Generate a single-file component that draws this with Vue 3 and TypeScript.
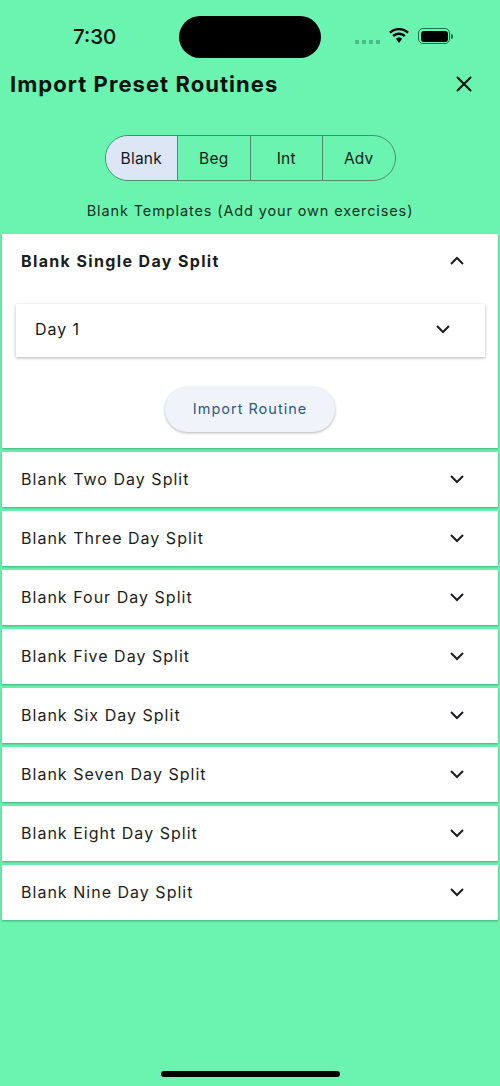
<script setup lang="ts">
const tabs: string[] = ['Blank', 'Beg', 'Int', 'Adv']
const splits: string[] = ['Two', 'Three', 'Four', 'Five', 'Six', 'Seven', 'Eight', 'Nine']
</script>

<template>
  <div class="screen">
    <div class="status">
      <span class="time">7:30</span>
      <div class="island"></div>
      <div class="status-icons">
        <div class="dots"><i></i><i></i><i></i><i></i></div>
        <svg class="wifi" width="22" height="16" viewBox="0 0 22 16">
          <path d="M11 2.2c3.2 0 6.1 1.2 8.3 3.3l1.6-1.7C18.3 1.300 14.800 0 11 0S3.700 1.300 1.100 3.800l1.600 1.700C4.900 3.400 7.800 2.200 11 2.200z" fill="#000"/>
          <path d="M11 7c1.900 0 3.600.7 4.900 1.900l1.700-1.700C15.800 5.600 13.500 4.600 11 4.600S6.200 5.600 4.400 7.200l1.700 1.700C7.400 7.700 9.100 7 11 7z" fill="#000"/>
          <path d="M11 9.500c-1.200 0-2.300.5-3.100 1.200L11 15l3.100-4.300c-.8-.7-1.900-1.200-3.100-1.200z" fill="#000"/>
        </svg>
        <div class="battery"><div class="battery-fill"></div></div>
      </div>
    </div>

    <header class="title-row">
      <h1>Import Preset Routines</h1>
      <svg width="18" height="18" viewBox="0 0 18 18" class="close">
        <path d="M2 2l14 14M16 2L2 16" stroke="#06120c" stroke-width="2" fill="none"/>
      </svg>
    </header>

    <div class="tabs">
      <div v-for="(t, i) in tabs" :key="t" class="tab" :class="{ active: i === 0 }">{{ t }}</div>
    </div>

    <p class="caption">Blank Templates (Add your own exercises)</p>

    <div class="list">
      <section class="card open">
        <div class="card-head bold">
          <span>Blank Single Day Split</span>
          <svg class="chev" width="16" height="10" viewBox="0 0 16 10"><path d="M2 8l6-6 6 6" /></svg>
        </div>
        <div class="day">
          <span>Day 1</span>
          <svg class="chev" width="16" height="10" viewBox="0 0 16 10"><path d="M2 2l6 6 6-6" /></svg>
        </div>
        <div class="action"><button class="import" type="button">Import Routine</button></div>
      </section>
      <section v-for="s in splits" :key="s" class="card">
        <div class="card-head">
          <span>Blank {{ s }} Day Split</span>
          <svg class="chev" width="16" height="10" viewBox="0 0 16 10"><path d="M2 2l6 6 6-6" /></svg>
        </div>
      </section>
    </div>

    <div class="home"></div>
  </div>
</template>

<style>
html, body { margin: 0; padding: 0; background: #6bf3b0; }
</style>

<style scoped>
.screen {
  position: relative;
  width: 500px;
  height: 1086px;
  overflow: hidden;
  background: #6bf3b0;
  font-family: Inter, "Liberation Sans", sans-serif;
  color: #16181a;
}
.status {
  height: 70px;
  position: relative;
}
.time {
  position: absolute;
  left: 73px;
  top: 24px;
  font-size: 20.500px;
  line-height: 26px;
  font-weight: 500;
  color: #06120c;
}
.island {
  position: absolute;
  left: 179px;
  top: 16px;
  width: 142px;
  height: 42px;
  border-radius: 21px;
  background: #000;
}
.status-icons {
  position: absolute;
  left: 355px;
  top: 28px;
  display: flex;
  align-items: center;
}
.dots {
  display: flex;
  gap: 3px;
  margin-top: 11px;
  margin-right: 8px;
}
.dots i {
  width: 4px;
  height: 4px;
  background: #47bd88;
  display: block;
}
.wifi { margin-right: 8px; }
.battery {
  position: relative;
  width: 32px;
  height: 16px;
  border: 1px solid #13734a;
  border-radius: 5px;
  padding: 1.500px;
  box-sizing: border-box;
}
.battery::after {
  content: "";
  position: absolute;
  right: -3.500px;
  top: 4.500px;
  width: 1.500px;
  height: 5px;
  background: #13734a;
  border-radius: 0 2px 2px 0;
}
.battery-fill {
  width: 100%;
  height: 100%;
  background: #000;
  border-radius: 3px;
}
.title-row {
  display: flex;
  align-items: center;
  justify-content: space-between;
  height: 28px;
  padding: 0 27px 0 10px;
}
h1 {
  margin: 0;
  font-size: 22px;
  line-height: 28px;
  font-weight: 700;
  letter-spacing: 1.050px;
  color: #07140d;
}
.close { display: block; }
.tabs {
  display: flex;
  box-sizing: border-box;
  width: 291px;
  height: 46px;
  margin: 37px auto 0;
  border: 1px solid #4f8a6f;
  border-radius: 23px;
  overflow: hidden;
}
.tab {
  flex: 1;
  display: flex;
  align-items: center;
  justify-content: center;
  font-size: 15.500px;
  letter-spacing: 0.200px;
  color: #0d1f18;
  border-left: 1px solid #4f8a6f;
}
.tab:first-child { border-left: 0; }
.tab.active {
  background: #dde6f5;
  color: #101828;
}
.caption {
  margin: 19px 0 0;
  height: 20px;
  text-align: center;
  font-size: 14.500px;
  line-height: 22px;
  letter-spacing: 0.880px;
  color: #123022;
}
.list {
  display: flex;
  flex-direction: column;
  gap: 4px;
  margin: 14px 2px 0;
}
.card {
  background: #fff;
  box-shadow: 0 1px 2px rgba(20, 90, 60, 0.45);
}
.card-head {
  height: 55px;
  box-sizing: border-box;
  display: flex;
  align-items: center;
  justify-content: space-between;
  padding: 0 33px 2px 19px;
  font-size: 16px;
  letter-spacing: 1.020px;
  color: #1c1d20;
}
.card-head.bold {
  font-weight: 700;
  letter-spacing: 1.360px;
  padding-bottom: 1px;
}
.chev { display: block; }
.chev path {
  fill: none;
  stroke: #1c1d20;
  stroke-width: 2;
}
.day {
  height: 53px;
  box-sizing: border-box;
  margin: 15px 13px 0 14px;
  display: flex;
  align-items: center;
  justify-content: space-between;
  padding: 0 34px 4px 19px;
  font-size: 16px;
  letter-spacing: 0.950px;
  background: #fff;
  box-shadow: 0 1px 3px rgba(0, 0, 0, 0.3);
}
.action {
  display: flex;
  justify-content: center;
  padding: 30px 0 16px;
}
.import {
  width: 170px;
  height: 45px;
  padding: 0 0 2px;
  border: 0;
  border-radius: 23px;
  background: #f0f3fa;
  box-shadow: 0 1px 3px rgba(0, 0, 0, 0.3);
  font-family: inherit;
  font-size: 14.500px;
  font-weight: 400;
  letter-spacing: 1px;
  color: #2a5a8c;
}
.home {
  position: absolute;
  left: 161px;
  top: 1071px;
  width: 179px;
  height: 6px;
  border-radius: 3px;
  background: #000;
}
</style>
